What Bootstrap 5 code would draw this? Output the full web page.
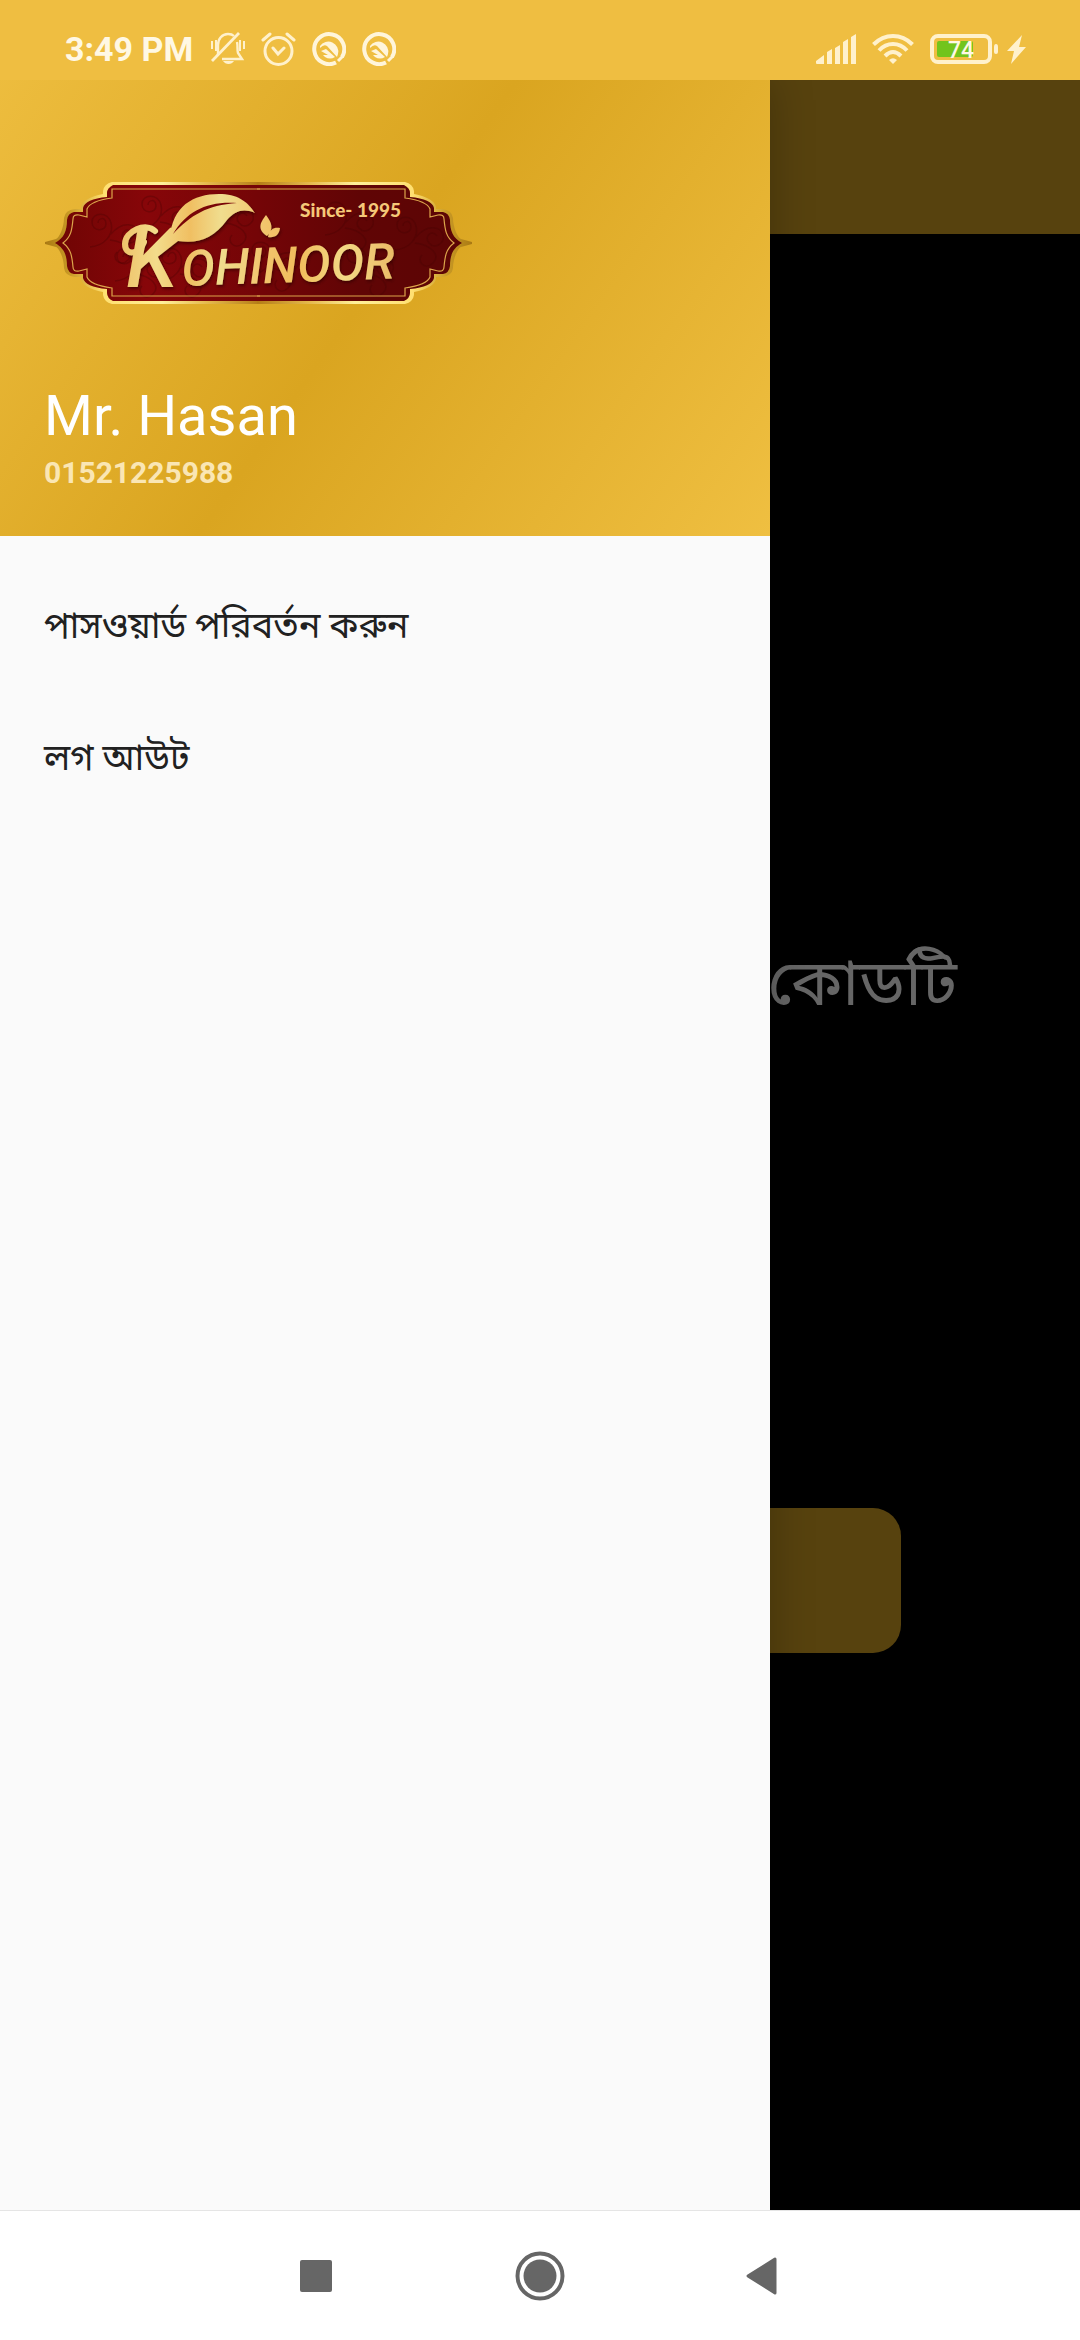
<!DOCTYPE html>
<html lang="bn">
<head>
<meta charset="utf-8">
<meta name="viewport" content="width=device-width, initial-scale=1">
<title>Kohinoor</title>
<link href="https://cdn.jsdelivr.net/npm/bootstrap@5.3.0/dist/css/bootstrap.min.css" rel="stylesheet">
<style>
body{font-family:Roboto,"Noto Sans Bengali","Noto Sans",sans-serif;background:#000}
.statusbar{height:80px;background:#efbe41;color:#fff8e4;padding:18px 54px 0 65px;z-index:3}
.clock{font-size:34px;font-weight:700;line-height:40px;margin-right:18px}
.statusbar svg,.sysnav svg{display:block;flex:none}
.topbar{height:154px;background:#57420e}
.stage{padding:0 123px}
.prompt{font-size:64px;line-height:96px;color:#666;margin-top:702px}
.scanbtn{height:145px;border:0;border-radius:28px;background:#57420e;margin:476px 56px 0}
.drawer{top:0;left:0;bottom:0;width:calc(100% - 310px);background:#fafafa;box-shadow:0 0 40px rgba(0,0,0,.25);z-index:2}
.drawer-head{margin-top:-80px;padding:182px 44px 0;height:536px;background:linear-gradient(125deg,#efbf41,#daa520 50%,#efbf41)}
.person{font-size:56px;line-height:66px;color:#fff;font-weight:400;margin-top:69px}
.phone{font-size:30px;line-height:36px;font-weight:700;color:#fae6b4;margin-top:6px}
.entry{font-size:36px;line-height:52px;padding:40px 44px;color:#212121;font-weight:400;text-decoration:none}
.menu{padding-top:24px}
.sysnav{height:130px;background:#fff;border-top:1px solid #e5e5e5;z-index:3}
.sysnav button{width:224px;border:0;background:none;padding:0}
</style>
<script src="https://cdn.jsdelivr.net/npm/bootstrap@5.3.0/dist/js/bootstrap.bundle.min.js"></script>
</head>
<body class="min-vh-100 d-flex flex-column m-0">
<header class="statusbar position-relative d-flex align-items-center justify-content-between">
  <div class="d-flex align-items-center">
    <span class="clock">3:49 PM</span>
    <svg width="34" height="34" viewBox="0 0 34 34" fill="none" stroke="#fff1cc" stroke-width="2.4"><path d="M7 23V13c0-6 4-11 10-11 3 0 5 1 6 2M26 10c1 4 0 8 1 11l4 6H11"/><path d="M1 29L28 1" stroke-width="2.8"/><path d="M1 9v8M5 8v11M29 8v11M33 9v8" stroke-width="2"/><path d="M12 29h11q-2 3-5.500 3T12 29z" fill="#fff1cc" stroke="none"/></svg>
    <svg class="ms-3" width="35" height="36" viewBox="0 0 35 36" fill="none" stroke="#fff1cc" stroke-width="3"><circle cx="17.500" cy="20" r="13.500"/><path d="M12 17l5 6 6-6M2 9l7-6M26 3l7 6" stroke-linecap="round"/></svg>
    <svg class="ms-3" width="34" height="34" viewBox="0 0 34 34"><path d="M24 30.500A15 15 0 1 1 30 25" fill="none" stroke="#fff5da" stroke-width="4"/><path d="M8 14a10 10 0 0 1 18 8l-1 3L15 14q-3-2-7 2z" fill="#fff5da"/><path d="M9 19l5-2 9 8q-5 3-10 0l-2-2h5z" fill="#fff5da"/><path d="M26 29l5-5" stroke="#fff5da" stroke-width="3"/></svg>
    <svg class="ms-3" width="34" height="34" viewBox="0 0 34 34"><path d="M24 30.500A15 15 0 1 1 30 25" fill="none" stroke="#fff5da" stroke-width="4"/><path d="M8 14a10 10 0 0 1 18 8l-1 3L15 14q-3-2-7 2z" fill="#fff5da"/><path d="M9 19l5-2 9 8q-5 3-10 0l-2-2h5z" fill="#fff5da"/><path d="M26 29l5-5" stroke="#fff5da" stroke-width="3"/></svg>
  </div>
  <div class="d-flex align-items-center">
    <svg width="40" height="30" viewBox="0 0 40 30" fill="#fff1cc"><path d="M0 27l8-6v9H1q-1 0-1-1zM11 18l5-3v15h-5zM19 14l5-3v19h-5zM27 8l5-3v25h-5zM35 3l5-3v30h-5z"/></svg>
    <svg class="ms-3" width="42" height="30" viewBox="0 0 42 30" fill="none" stroke="#fff1cc" stroke-width="4"><path d="M1.500 10.500Q10 2 21 2t19.500 8.500M7 16.500q6-6.500 14-6.500t14 6.500M13 22q4-4 8-4t8 4"/><path d="M17 26q4-3.500 8 0l-4 4z" fill="#fff1cc" stroke="none"/></svg>
    <svg class="ms-3" width="69" height="30" viewBox="0 0 69 30"><rect x="2" y="2" width="58" height="26" rx="6" fill="none" stroke="#fff1cc" stroke-width="4"/><rect x="7" y="7" width="36" height="16" rx="2" fill="#72c41c"/><path d="M64 13q0-3 2-3t2 3v5q0 2-2 2t-2-2z" fill="#fff1cc"/><text x="18" y="24" font-family="Roboto,sans-serif" font-size="23" font-weight="500" fill="#fff8e4">74</text></svg>
    <svg class="ms-2" width="19" height="30" viewBox="0 0 19 30"><path d="M15 1L0 17h7L4 30 19 13h-7z" fill="#fff1cc"/></svg>
  </div>
</header>
<main class="flex-grow-1 position-relative d-flex flex-column">
  <div class="topbar"></div>
  <div class="stage d-flex flex-column">
    <div class="prompt text-end">কোডটি</div>
    <button class="scanbtn" type="button" aria-label="Scan"></button>
  </div>
  <aside class="drawer position-absolute">
    <div class="drawer-head">
      <svg class="d-block" width="430" height="132" viewBox="44 182 430 132" role="img" aria-label="Kohinoor">
        <defs>
          <linearGradient id="rim" gradientUnits="userSpaceOnUse" x1="44" y1="0" x2="259" y2="0"><stop offset="0" stop-color="#a87812"/><stop offset=".12" stop-color="#c99a26"/><stop offset=".28" stop-color="#ffe071"/><stop offset=".55" stop-color="#fff09a"/><stop offset=".76" stop-color="#e5b94d"/><stop offset="1" stop-color="#b57d18"/></linearGradient>
          <linearGradient id="redL" gradientUnits="userSpaceOnUse" x1="55" y1="0" x2="259" y2="0"><stop offset="0" stop-color="#6f0504"/><stop offset=".45" stop-color="#870609"/><stop offset="1" stop-color="#740507"/></linearGradient>
          <linearGradient id="redR" gradientUnits="userSpaceOnUse" x1="55" y1="0" x2="259" y2="0"><stop offset="0" stop-color="#5c0505"/><stop offset=".5" stop-color="#600505"/><stop offset="1" stop-color="#740507"/></linearGradient>
          <linearGradient id="foil" gradientUnits="userSpaceOnUse" x1="120" y1="0" x2="400" y2="0"><stop offset="0" stop-color="#eec269"/><stop offset=".13" stop-color="#f3dc8b"/><stop offset=".25" stop-color="#f0bf62"/><stop offset=".36" stop-color="#f0dd8e"/><stop offset=".52" stop-color="#f2c46c"/><stop offset=".64" stop-color="#f1bd5c"/><stop offset=".8" stop-color="#f3d985"/><stop offset="1" stop-color="#eab864"/></linearGradient>
          <filter id="soft" x="-10%" y="-10%" width="120%" height="130%"><feDropShadow dx="1" dy="2" stdDeviation="1.500" flood-color="#300" flood-opacity=".7"/></filter>
          <path id="outer" d="M260 182H112q-8 2-9 9v3q-20 4-22 13v2h-6q-10 1-11 9c0 10-5 20-8 21l-11 3v2l11 3c3 1 8 11 8 21q1 8 11 9h6v2q2 9 22 13v3q1 7 9 9h148z"/>
          <path id="band" d="M260 185H113q-6 3-6 8v4q-22 2-24 11v4h-9q-6 1-7 8c0 11-3 18-12 23 9 5 12 12 12 23q1 7 7 8h9v4q2 9 24 11v4q0 5 6 8h147z"/>
          <path id="line" d="M260 189H112v9q-22 3-25 11v8l-8-2q-6-1-6 4c-1 11-2 18-10 24 8 6 9 13 10 24q0 5 6 4l8-2v8q3 8 25 11v8h148"/>
          <path id="curl" d="M0 35c14-1 24-12 21-24S2 0 2 10s14 10 14 2-8-6-8-1M21 22C33 8 46 12 48 20s-8 15-14 8 4-14 8-7M20 28c16 2 26 12 18 20s-17-2-11-8"/>
        </defs>
        <use href="#outer" fill="url(#rim)"/><use href="#outer" fill="url(#rim)" transform="translate(517 0) scale(-1 1)"/>
        <use href="#band" fill="url(#redL)"/><use href="#band" fill="url(#redR)" transform="translate(517 0) scale(-1 1)"/>
        <g fill="none" stroke="#430203" stroke-opacity=".3" stroke-width="1.500"><use href="#curl" x="90" y="212"/><use href="#curl" x="140" y="194"/><use href="#curl" x="115" y="246"/><use href="#curl" x="205" y="195"/><use href="#curl" x="160" y="246"/><use href="#curl" x="250" y="240"/><use href="#curl" x="325" y="200"/><use href="#curl" x="345" y="245"/><use href="#curl" x="395" y="215"/></g>
        <g fill="none" stroke="#dca54b" stroke-width="1.200"><use href="#line"/><use href="#line" transform="translate(517 0) scale(-1 1)"/></g>
        <g filter="url(#soft)" fill="url(#foil)">
          <path d="M170 238C172 205 195 193 222 194 240 195 248 203 255 213c-12-5-20-2-28 7-14 19-29 24-49 21l-23 18c-3-5 8-14 15-21z"/>
          <text x="126" y="287" font-family="Roboto,sans-serif" font-size="84" font-style="italic" font-weight="500">K</text>
          <path d="M155 231c-9-9-30 0-30 13 0 12 14 11 19-2" fill="none" stroke="url(#foil)" stroke-width="6" stroke-linecap="round"/>
          <text x="182" y="286" font-family="Roboto,sans-serif" font-size="50" font-style="italic" font-weight="500" transform="rotate(-2 182 286)">OHINOOR</text>
          <path d="M267 236c-10-7-7-13-1-21 6 8 8 14 1 21zm1 1c2-9 7-10 12-9-1 7-5 10-12 9z"/>
        </g>
        <path d="M173 234C187 211 207 201 237 203 207 205 191 215 173 234z" fill="#790608"/>
        <text x="300" y="217" font-family="Lato,sans-serif" font-size="19" font-weight="900" fill="#f5c878">Since- 1995</text>
      </svg>
      <h1 class="person mb-0">Mr. Hasan</h1>
      <div class="phone">01521225988</div>
    </div>
    <nav class="menu d-flex flex-column">
      <a class="entry" href="#">পাসওয়ার্ড পরিবর্তন করুন</a>
      <a class="entry" href="#">লগ আউট</a>
    </nav>
  </aside>
</main>
<footer class="sysnav position-relative d-flex justify-content-center align-items-center">
  <button type="button" aria-label="Recent apps"><svg class="mx-auto" width="32" height="32"><rect width="32" height="32" rx="2" fill="#666"/></svg></button>
  <button type="button" aria-label="Home"><svg class="mx-auto" width="50" height="50"><circle cx="25" cy="25" r="22.500" fill="none" stroke="#666" stroke-width="4"/><circle cx="25" cy="25" r="16.500" fill="#666"/></svg></button>
  <button type="button" aria-label="Back"><svg class="mx-auto" width="36" height="38"><path d="M2 19L29 2v34z" fill="#666" stroke="#666" stroke-width="3" stroke-linejoin="round"/></svg></button>
</footer>
</body>
</html>
